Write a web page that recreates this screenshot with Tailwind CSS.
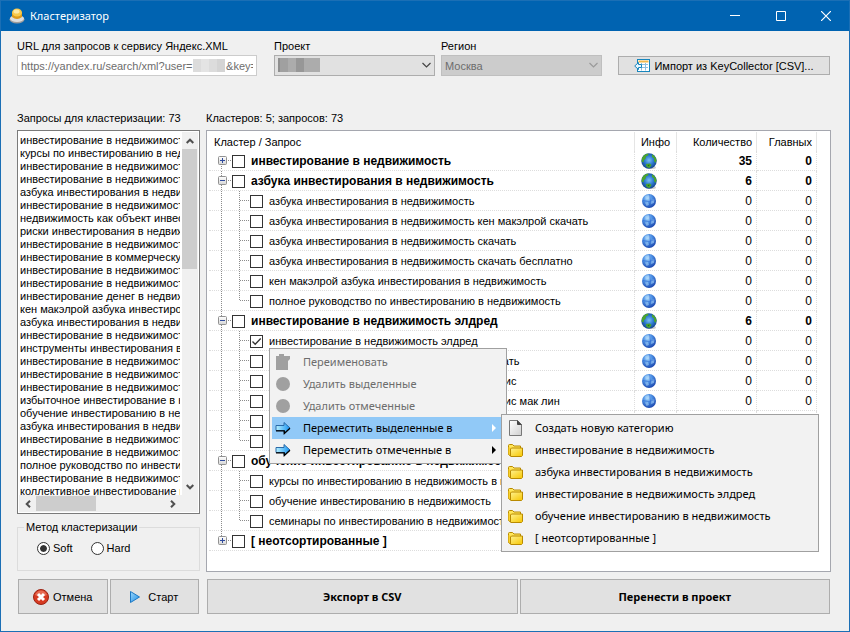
<!DOCTYPE html>
<html lang="ru">
<head>
    <meta charset="UTF-8">
    <meta name="viewport" content="width=device-width, initial-scale=1.0">
    <title>Кластеризатор</title>
    <script src="https://cdn.jsdelivr.net/npm/@tailwindcss/browser@4"></script>
</head>
<body class="bg-[#f0f0f0] text-black text-[11px] leading-4 font-['Liberation_Sans',Arial,sans-serif]">
    <!-- Общие иконки -->
    <svg class="absolute w-0 h-0" aria-hidden="true">
        <defs>
            <radialGradient id="gBlue" cx="0.4" cy="0.3" r="0.75">
                <stop offset="0" stop-color="#b9e0fb"/>
                <stop offset="0.4" stop-color="#4f93e6"/>
                <stop offset="1" stop-color="#153fa8"/>
            </radialGradient>
            <radialGradient id="gEarth" cx="0.5" cy="0.45" r="0.6">
                <stop offset="0" stop-color="#7cc0f5"/>
                <stop offset="0.5" stop-color="#2b78cf"/>
                <stop offset="1" stop-color="#123a7c"/>
            </radialGradient>
            <linearGradient id="gFolder" x1="0" y1="0" x2="1" y2="1">
                <stop offset="0" stop-color="#fff59a"/>
                <stop offset="1" stop-color="#f7c600"/>
            </linearGradient>
            <linearGradient id="gArrow" x1="0" y1="0" x2="1" y2="0">
                <stop offset="0" stop-color="#b8f1ff"/>
                <stop offset="1" stop-color="#1793f2"/>
            </linearGradient>
            <linearGradient id="gPlay" x1="0" y1="0" x2="1" y2="1">
                <stop offset="0" stop-color="#9bd6fb"/>
                <stop offset="1" stop-color="#1f8fe6"/>
            </linearGradient>
            <linearGradient id="gPage" x1="0" y1="0" x2="1" y2="1">
                <stop offset="0" stop-color="#ffffff"/>
                <stop offset="1" stop-color="#cfcfcf"/>
            </linearGradient>
            <linearGradient id="gBox" x1="0" y1="0" x2="0" y2="1">
                <stop offset="0" stop-color="#ffffff"/>
                <stop offset="1" stop-color="#d6d6d6"/>
            </linearGradient>
        </defs>
        <symbol id="globe" viewBox="0 0 16 16">
            <circle cx="8" cy="8" r="7" fill="url(#gBlue)"/>
            <path d="M4 3.5Q7 1.5 9.5 2.5L8 5.5 5 6.5ZM10.5 7L13.5 6 13 10 10 11ZM4 9.5L7 9 8 12 5.5 13Z" fill="#a9d5fa" opacity=".55"/>
            <path d="M2 7.5Q8 10 14 6.5M8.5 1.5Q11 8 7.5 14.5" fill="none" stroke="#2a63cf" stroke-width=".7" opacity=".7"/>
        </symbol>
        <symbol id="earth" viewBox="0 0 16 16">
            <ellipse cx="10" cy="14.5" rx="5" ry="1.5" fill="#cfcfcf"/>
            <circle cx="8" cy="8" r="7.7" fill="url(#gEarth)"/>
            <path d="M1 5Q3 1 7.5.6L7 2.5 5 3.5 4.5 6 3 7 2.5 9.5.6 8.5ZM11 1.3Q15 3.5 15.6 7.5L14.5 10 13 8 13.2 5.5 11 4ZM5 11L9 10.5 10.5 12 8.5 15 5.5 14Z" fill="#4ba52c"/>
            <path d="M6.5 12L8.5 11.8 8 13.5Z" fill="#1f6b1a"/>
        </symbol>
        <symbol id="folder" viewBox="0 0 16 16">
            <path d="M1.5 12.5V3.5Q1.5 2.5 2.5 2.5H5.5L7 4H13.5V6" fill="#ffe65a" stroke="#b98a00"/>
            <path d="M1.5 12.5V5L4.5 6V14Z" fill="#fbd22c"/>
            <path d="M1.5 12.5L4 14.5H14.5L15.5 13.5V6H4.5L3.5 7V14" fill="url(#gFolder)" stroke="#b98a00"/>
        </symbol>
        <symbol id="arrow" viewBox="0 0 16 16">
            <path d="M1 5.5H9V2.5L15 8 9 13.5V10.5H1Z" fill="url(#gArrow)" stroke="#2a6aa8"/>
            <path d="M1 10.8H9.3V13.6L15 8.3" fill="none" stroke="#000" stroke-width="1.3"/>
        </symbol>
        <symbol id="page" viewBox="0 0 16 16">
            <path d="M2.5.5H10.5L14.5 4.5V15.5H2.5Z" fill="url(#gPage)" stroke="#777"/>
            <path d="M10.5.5V4.5H14.5" fill="#444" stroke="#444"/>
        </symbol>
    </svg>

    <div class="min-h-screen flex flex-col border border-[#1b6fb5]">
        <!-- Заголовок окна -->
        <header class="h-[30px] bg-[#0063b1] text-white flex items-center pl-2">
            <svg class="w-4 h-4" viewBox="0 0 16 16">
                <ellipse cx="8" cy="11.5" rx="7.5" ry="4" fill="#9b9b9b"/>
                <ellipse cx="8" cy="10.5" rx="7" ry="3.5" fill="#dedede"/>
                <path d="M3 4.500V9Q8 13 13 9V4.5Z" fill="#dd9a1c"/>
                <ellipse cx="8" cy="4.5" rx="5" ry="4" fill="#f8c94a"/>
                <ellipse cx="7.5" cy="3.5" rx="3" ry="2" fill="#fde9a6"/>
            </svg>
            <h1 class="pl-[5px] flex-1 font-['Noto_Sans',sans-serif]">Кластеризатор</h1>
            <button aria-label="Свернуть" class="w-[46px] h-full flex items-center justify-center">
                <svg class="w-[10px] h-[10px]" viewBox="0 0 10 10"><path d="M0 4.5H10" stroke="#fff"/></svg>
            </button>
            <button aria-label="Развернуть" class="w-[45px] h-full flex items-center justify-center">
                <svg class="w-[10px] h-[10px]" viewBox="0 0 10 10"><path d="M.5.5H9.5V9.5H.5Z" fill="none" stroke="#fff"/></svg>
            </button>
            <button aria-label="Закрыть" class="w-[46px] h-full flex items-center justify-center">
                <svg class="w-[10px] h-[10px]" viewBox="0 0 10 10"><path d="M0 0L10 10M10 0L0 10" stroke="#fff" stroke-width="1.2"/></svg>
            </button>
        </header>

        <main class="flex-1 flex flex-col pl-4 pr-[18px] pt-[7px] pb-[17px]">
            <!-- Параметры -->
            <div class="flex items-end">
                <div class="w-60 mr-[17px]">
                    <label for="url" class="block">URL для запросов к сервису Яндекс.XML</label>
                    <div class="relative">
                        <input id="url" type="text" readonly value="https://yandex.ru/search/xml?user=&nbsp;&nbsp;&nbsp;&nbsp;&nbsp;&nbsp;&nbsp;&nbsp;&nbsp;&nbsp;&nbsp;&key=" class="block w-full h-[21px] px-[3px] mt-px bg-white border border-[#ccc] text-[#6d6d6d]">
                        <span class="absolute left-[176px] top-1 w-8 h-[13px] bg-[#dcdcdc] flex">
                            <span class="w-2 ml-2 bg-[#e4e4e4]"></span>
                            <span class="w-2 ml-2 bg-[#d4d4d4]"></span>
                        </span>
                    </div>
                </div>
                <div class="w-[161px] mr-[6px]">
                    <label for="project" class="block">Проект</label>
                    <div class="relative mt-px">
                        <select id="project" class="appearance-none block w-full h-[21px] px-1 bg-[#e1e1e1] border border-[#adadad]">
                            <option></option>
                        </select>
                        <span class="absolute left-1 top-[3px] w-[42px] h-[14px] bg-[#acacac] flex">
                            <span class="w-[2px] bg-[#8f8f8f]"></span>
                            <span class="w-2 bg-[#a0a0a0]"></span>
                            <span class="w-2 ml-2 bg-[#979797]"></span>
                        </span>
                        <svg class="absolute right-1 top-[7px] w-[9px] h-[7px] pointer-events-none" viewBox="0 0 9 7"><path d="M.5 1L4.5 5 8.5 1" fill="none" stroke="#444" stroke-width="1.2"/></svg>
                    </div>
                </div>
                <div class="w-[161px] mr-4">
                    <label for="region" class="block">Регион</label>
                    <div class="relative mt-px">
                        <select id="region" disabled class="appearance-none block w-full h-[21px] px-[3px] bg-[#ccc] border border-[#bfbfbf] text-[#6d6d6d] opacity-100">
                            <option>Москва</option>
                        </select>
                        <svg class="absolute right-1 top-[7px] w-[9px] h-[7px] pointer-events-none" viewBox="0 0 9 7"><path d="M.5 1L4.5 5 8.5 1" fill="none" stroke="#9a9a9a" stroke-width="1.2"/></svg>
                    </div>
                </div>
                <button class="flex-1 h-[19px] mr-px mb-px bg-[#e1e1e1] border border-[#adadad] flex items-center justify-center gap-1">
                    <svg class="w-4 h-[14px]" viewBox="0 0 16 14">
                        <rect x="3.5" y=".5" width="12" height="12" fill="#fff" stroke="#1886bd"/>
                        <path d="M4.5 2.5H14.5" stroke="#f2b84b" stroke-width="2"/>
                        <path d="M5 5.5H14M5 8.5H14M7.5 4V11.5M11.5 4V11.5" stroke="#8fbede"/>
                        <path d="M.7 7L4.5 3.5V5.5H7.5V8.5H4.5V10.5Z" fill="#eaf7ff" stroke="#1886bd"/>
                    </svg>
                    Импорт из KeyCollector [CSV]...
                </button>
            </div>

            <div class="flex-1 flex gap-[6px] mt-[34px]">
                <!-- Список запросов -->
                <section class="w-[183px] flex flex-col">
                    <h2 class="mb-1">Запросы для кластеризации: 73</h2>
                    <div class="h-96 bg-white border border-[#7a7a7a] p-px flex flex-col">
                        <div class="flex-1 min-h-0 flex">
                            <ul id="queryList" class="flex-1 min-w-0 overflow-hidden pl-px mr-[2px] pt-[2px] leading-[13px] whitespace-nowrap"></ul>
                            <div class="w-4 bg-[#f0f0f0] flex flex-col justify-between">
                                <div>
                                    <button aria-label="Вверх" class="w-4 h-[17px] flex items-center justify-center">
                                        <svg class="w-2 h-[6px]" viewBox="0 0 8 6"><path d="M.7 5L4 1.7 7.3 5" fill="none" stroke="#505050" stroke-width="2"/></svg>
                                    </button>
                                    <div class="h-[120px] w-[15px] bg-[#cdcdcd]"></div>
                                </div>
                                <button aria-label="Вниз" class="w-4 h-[17px] flex items-center justify-center">
                                    <svg class="w-2 h-[6px]" viewBox="0 0 8 6"><path d="M.7 1L4 4.3 7.3 1" fill="none" stroke="#505050" stroke-width="2"/></svg>
                                </button>
                            </div>
                        </div>
                        <div class="h-[17px] bg-[#f0f0f0] flex items-center justify-between pr-[17px]">
                            <div class="flex">
                                <button aria-label="Влево" class="w-[17px] h-[15px] flex items-center justify-center">
                                    <svg class="w-[6px] h-2" viewBox="0 0 6 8"><path d="M5 .7L1.7 4 5 7.3" fill="none" stroke="#505050" stroke-width="2"/></svg>
                                </button>
                                <div class="h-[15px] w-[60px] bg-[#cdcdcd]"></div>
                            </div>
                            <button aria-label="Вправо" class="w-[17px] h-[15px] flex items-center justify-center">
                                <svg class="w-[6px] h-2" viewBox="0 0 6 8"><path d="M1 .7L4.3 4 1 7.3" fill="none" stroke="#505050" stroke-width="2"/></svg>
                            </button>
                        </div>
                    </div>

                    <fieldset class="mt-[5px] border border-[#dcdcdc] h-[52px] px-[6px]">
                        <legend class="px-[2px]">Метод кластеризации</legend>
                        <div class="flex gap-[18px] pl-[13px] pt-[5px]">
                            <label class="flex items-center gap-[3px]">
                                <input type="radio" name="method" checked class="appearance-none w-[13px] h-[13px] rounded-full border border-[#333] bg-white p-[2px] bg-clip-content checked:bg-[#333] shadow-[inset_0_0_0_2px_#fff]">
                                Soft
                            </label>
                            <label class="flex items-center gap-[3px]">
                                <input type="radio" name="method" class="appearance-none w-[13px] h-[13px] rounded-full border border-[#333] bg-white">
                                Hard
                            </label>
                        </div>
                    </fieldset>

                    <div class="grid grid-cols-2 gap-[2px] mt-2 mx-px">
                        <button class="h-[35px] bg-[#e1e1e1] border border-[#adadad] flex items-center justify-center gap-1">
                            <svg class="w-4 h-4" viewBox="0 0 16 16">
                                <circle cx="8" cy="8" r="7.5" fill="#d63a22" stroke="#9c2414"/>
                                <path d="M2 6Q4 1.5 8 1.5T14 6Q8 9 2 6Z" fill="#f08c74" opacity=".6"/>
                                <path d="M5 5L11 11M11 5L5 11" stroke="#fff" stroke-width="3"/>
                            </svg>
                            Отмена
                        </button>
                        <button class="h-[35px] bg-[#e1e1e1] border border-[#adadad] flex items-center justify-center gap-2">
                            <svg class="w-[10px] h-3" viewBox="0 0 10 12"><path d="M.5.5L9.5 6 .5 11.5Z" fill="url(#gPlay)" stroke="#1d78c4"/></svg>
                            Старт
                        </button>
                    </div>
                </section>

                <!-- Дерево кластеров -->
                <section class="flex-1 min-w-0 flex flex-col">
                    <h2 class="mb-1">Кластеров: 5; запросов: 73</h2>
                    <div class="relative h-[442px] bg-white border border-[#a5a7af] pl-[2px] pr-[13px] pt-px">
                        <table class="w-full table-fixed border-separate border-spacing-0">
                            <thead>
                                <tr class="h-[19px]">
                                    <th class="p-0 pl-[5px] text-left font-normal border-r border-[#e5e5e5]">Кластер / Запрос</th>
                                    <th class="p-0 w-[42px] text-center font-normal border-r border-[#e5e5e5]">Инфо</th>
                                    <th class="p-0 w-20 pr-1 text-right font-normal border-r border-[#e5e5e5]">Количество</th>
                                    <th class="p-0 w-[60px] pr-1 text-right font-normal border-r border-[#e5e5e5]">Главных</th>
                                </tr>
                            </thead>
                            <tbody id="clusterRows"></tbody>
                        </table>

                        <!-- Контекстное меню -->
                        <div class="absolute left-[62px] top-[217px] w-[238px] h-[116px] bg-[#f2f2f2] border border-[#a0a0a0] p-[2px] font-['Noto_Sans',sans-serif]">
                            <button disabled class="w-full h-[22px] flex items-center text-[#6d6d6d]">
                                <svg class="w-4 h-4 ml-[3px] mr-3" viewBox="0 0 16 16"><path d="M1 2H4V0H9V2H15V5L13 7V16H1Z" fill="#a0a0a0"/></svg>
                                Переименовать
                            </button>
                            <button disabled class="w-full h-[22px] flex items-center text-[#6d6d6d]">
                                <svg class="w-4 h-4 ml-[3px] mr-3" viewBox="0 0 16 16"><circle cx="8" cy="8" r="7" fill="#a0a0a0"/></svg>
                                Удалить выделенные
                            </button>
                            <button disabled class="w-full h-[22px] flex items-center text-[#6d6d6d]">
                                <svg class="w-4 h-4 ml-[3px] mr-3" viewBox="0 0 16 16"><circle cx="8" cy="8" r="7" fill="#a0a0a0"/></svg>
                                Удалить отмеченные
                            </button>
                            <button class="w-full h-[22px] flex items-center bg-[#91c9f7]">
                                <svg class="w-4 h-4 ml-[3px] mr-3"><use href="#arrow"/></svg>
                                <span class="flex-1 text-left">Переместить выделенные в</span>
                                <svg class="w-1 h-2 mr-2" viewBox="0 0 4 8"><path d="M0 0L4 4 0 8Z" fill="#fff"/></svg>
                            </button>
                            <button class="w-full h-[22px] flex items-center">
                                <svg class="w-4 h-4 ml-[3px] mr-3"><use href="#arrow"/></svg>
                                <span class="flex-1 text-left">Переместить отмеченные в</span>
                                <svg class="w-1 h-2 mr-2" viewBox="0 0 4 8"><path d="M0 0L4 4 0 8Z" fill="#000"/></svg>
                            </button>

                            <div id="subMenu" class="absolute left-[231px] top-[65px] w-[318px] bg-[#f2f2f2] border border-[#a0a0a0] p-[2px]"></div>
                        </div>
                    </div>

                    <div class="grid grid-cols-2 gap-[2px] mt-[7px] mx-px font-bold font-['Noto_Sans',sans-serif]">
                        <button class="h-[35px] bg-[#e1e1e1] border border-[#adadad]">Экспорт в CSV</button>
                        <button class="h-[35px] bg-[#e1e1e1] border border-[#adadad]">Перенести в проект</button>
                    </div>
                </section>
            </div>
        </main>
    </div>

    <script>
        const queries = [
            'инвестирование в недвижимость',
            'курсы по инвестированию в недвижимость',
            'инвестирование в недвижимость элдред',
            'инвестирование в недвижимость скачать',
            'азбука инвестирования в недвижимость',
            'инвестирование в недвижимость за рубежом',
            'недвижимость как объект инвестирования',
            'риски инвестирования в недвижимость',
            'инвестирование в недвижимость книга',
            'инвестирование в коммерческую недвижимость',
            'инвестирование в недвижимость в россии',
            'инвестирование в недвижимость москвы',
            'инвестирование денег в недвижимость',
            'кен макэлрой азбука инвестирования',
            'азбука инвестирования в недвижимость скачать',
            'инвестирование в недвижимость форум',
            'инструменты инвестирования в недвижимость',
            'инвестирование в недвижимость отзывы',
            'инвестирование в недвижимость сша',
            'инвестирование в недвижимость 2016',
            'избыточное инвестирование в недвижимость',
            'обучение инвестированию в недвижимость',
            'азбука инвестирования в недвижимость кен макэлрой',
            'инвестирование в недвижимость украина',
            'инвестирование в недвижимость европы',
            'полное руководство по инвестированию в недвижимость',
            'инвестирование в недвижимость германии',
            'коллективное инвестирование в недвижимость'
        ];

        const clusters = [
            { name: 'инвестирование в недвижимость', count: 35, items: [] },
            { name: 'азбука инвестирования в недвижимость', count: 6, items: [
                'азбука инвестирования в недвижимость',
                'азбука инвестирования в недвижимость кен макэлрой скачать',
                'азбука инвестирования в недвижимость скачать',
                'азбука инвестирования в недвижимость скачать бесплатно',
                'кен макэлрой азбука инвестирования в недвижимость',
                'полное руководство по инвестированию в недвижимость'
            ] },
            { name: 'инвестирование в недвижимость элдред', count: 6, checked: 0, items: [
                'инвестирование в недвижимость элдред',
                'инвестирование в недвижимость элдред скачать',
                'инвестирование в недвижимость элдред эндрис',
                'инвестирование в недвижимость элдред эндрис мак лин',
                'гэри элдред инвестирование',
                'элдред инвестирование'
            ] },
            { name: 'обучение инвестированию в недвижимость', count: 3, items: [
                'курсы по инвестированию в недвижимость в москве',
                'обучение инвестированию в недвижимость',
                'семинары по инвестированию в недвижимость'
            ] },
            { name: '[ неотсортированные ]', count: 23, items: [] }
        ];

        // Флажок с подписью
        function checkBox(name, checked) {
            return `
                <label class="flex items-center">
                    <span class="relative w-[13px] h-[13px] mt-px mr-[6px]">
                        <input type="checkbox" ${checked ? 'checked' : ''} class="peer appearance-none block w-[13px] h-[13px] border border-[#333] bg-white">
                        <svg class="absolute inset-0 w-[13px] h-[13px] hidden peer-checked:block pointer-events-none" viewBox="0 0 13 13"><path d="M2.5 6.5L5.2 9.3 10.7 3.5" fill="none" stroke="#333" stroke-width="1.3"/></svg>
                    </span>
                    ${name}
                </label>`;
        }

        // Линии дерева слева от строки кластера
        function rootGuide(c, first, last) {
            return `
                <button aria-label="Развернуть кластер" class="w-[23px] h-[19px] shrink-0">
                    <svg class="w-[23px] h-[19px]" viewBox="0 0 23 19">
                        <path d="M12.5 ${first ? 9 : 0}V${last ? 9 : 20}M17 9.5H23" stroke="#8c8c8c" stroke-dasharray="1 1"/>
                        <rect x="9.5" y="5.5" width="8" height="8" rx="1" fill="url(#gBox)" stroke="#919191"/>
                        <path d="M11 9.5H16${c.items.length ? '' : 'M13.5 7V12'}" stroke="#2f4b9c"/>
                    </svg>
                </button>`;
        }

        function childGuide(last) {
            return `
                <svg class="w-[41px] h-[19px] shrink-0" viewBox="0 0 41 19">
                    <path d="M12.5 0V20M30.5 0V${last ? 10 : 20}M31 9.5H41" stroke="#8c8c8c" stroke-dasharray="1 1"/>
                </svg>`;
        }

        function addRow(guide, name, checked, icon, count, bold) {
            const row = document.createElement('tr');
            row.className = bold ? 'h-5 text-[12px] font-bold' : 'h-5';
            row.innerHTML = `
                <td class="p-0 border-r border-b border-dotted border-[#ddd]">
                    <div class="flex items-center h-[19px] whitespace-nowrap">${guide}${checkBox(name, checked)}</div>
                </td>
                <td class="p-0 border-r border-b border-dotted border-[#ddd]"><svg class="w-4 h-4 ml-[6px]"><use href="#${icon}"/></svg></td>
                <td class="p-0 pr-1 text-right text-[12px] border-r border-b border-dotted border-[#ddd]">${count}</td>
                <td class="p-0 pr-1 text-right text-[12px] border-r border-b border-dotted border-[#ddd]">0</td>
            `;
            document.getElementById('clusterRows').appendChild(row);
        }

        function loadQueries() {
            document.getElementById('queryList').innerHTML = queries.map(q => `<li>${q}</li>`).join('');
        }

        function loadClusters() {
            clusters.forEach((c, i) => {
                addRow(rootGuide(c, i === 0, i === clusters.length - 1), c.name, false, 'earth', c.count, true);
                c.items.forEach((item, j) => {
                    addRow(childGuide(j === c.items.length - 1), item, c.checked === j, 'globe', 0, false);
                });
            });
        }

        // Подменю со списком категорий
        function loadSubMenu() {
            const items = ['Создать новую категорию', ...clusters.map(c => c.name)];
            document.getElementById('subMenu').innerHTML = items.map((name, i) => `
                <button class="w-full h-[22px] flex items-center">
                    <svg class="w-4 h-4 ml-[3px] mr-3"><use href="#${i === 0 ? 'page' : 'folder'}"/></svg>
                    ${name}
                </button>
            `).join('');
        }

        loadQueries();
        loadClusters();
        loadSubMenu();
    </script>
</body>
</html>
